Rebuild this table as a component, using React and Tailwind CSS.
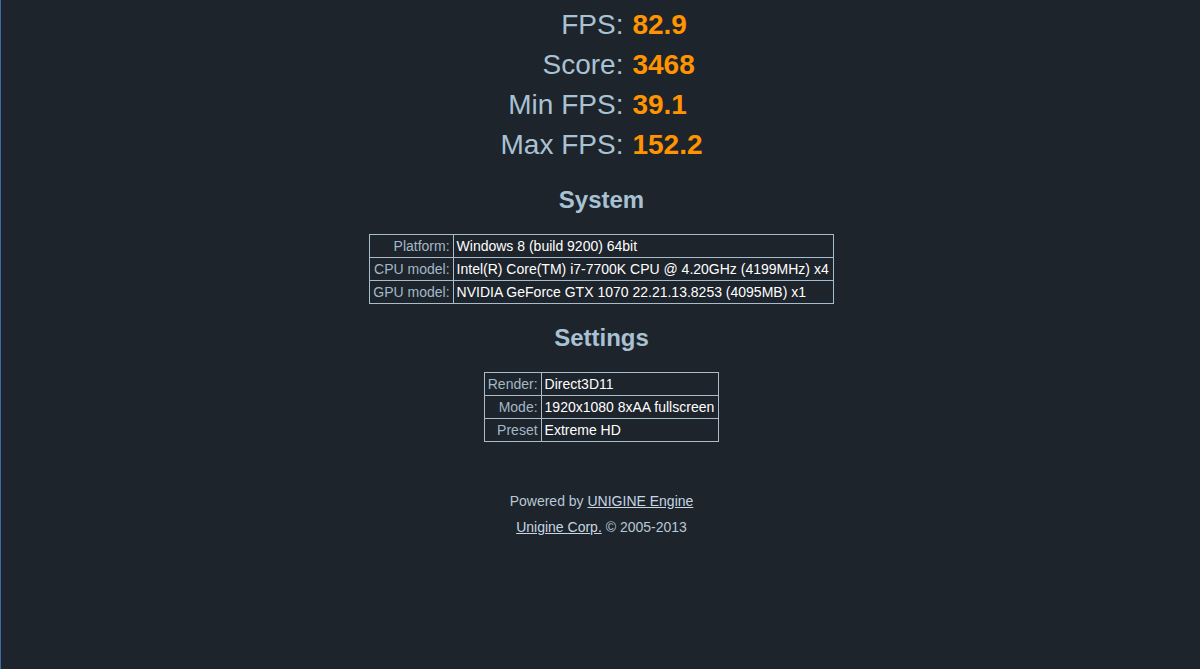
export default function App() {
  const stats = [
    ["FPS:", "82.9"],
    ["Score:", "3468"],
    ["Min FPS:", "39.1"],
    ["Max FPS:", "152.2"],
  ];
  const system = [
    ["Platform:", "Windows 8 (build 9200) 64bit"],
    ["CPU model:", "Intel(R) Core(TM) i7-7700K CPU @ 4.20GHz (4199MHz) x4"],
    ["GPU model:", "NVIDIA GeForce GTX 1070 22.21.13.8253 (4095MB) x1"],
  ];
  const settings = [
    ["Render:", "Direct3D11"],
    ["Mode:", "1920x1080 8xAA fullscreen"],
    ["Preset", "Extreme HD"],
  ];
  const Table = ({ rows }) => (
    <table className="mx-auto border-collapse text-[14px]">
      <tbody>
        {rows.map(([k, v]) => (
          <tr key={k}>
            <td className="border border-[#a9bccb] px-[3px] py-0 h-[23px] leading-[18px] text-right text-[#a3b8c6] whitespace-nowrap">
              {k}
            </td>
            <td className="border border-[#a9bccb] pl-[3px] pr-[4px] py-0 h-[23px] leading-[18px] text-left text-white whitespace-nowrap">
              {v}
            </td>
          </tr>
        ))}
      </tbody>
    </table>
  );
  return (
    <div
      className="min-h-[669px] w-full bg-[#1d242c] border-l border-[#3d6aa8] overflow-hidden pl-[2px]"
      style={{ fontFamily: '"Liberation Sans", Arial, sans-serif' }}
    >
      <div className="pt-[5px] flex justify-center">
        <div className="grid grid-cols-[auto_auto] gap-x-[9px] text-[28px] leading-[40px]">
          {stats.map(([k, v]) => (
            <div key={k} className="contents">
              <div className="text-right text-[#a9c2d3]">{k}</div>
              <div className="text-left font-bold text-[#ff9400]">{v}</div>
            </div>
          ))}
        </div>
      </div>
      <h2 className="mt-[21px] mb-[20px] text-center text-[24px] leading-[28px] font-bold text-[#a9c2d3]">
        System
      </h2>
      <Table rows={system} />
      <h2 className="mt-[20px] mb-[20px] text-center text-[24px] leading-[28px] font-bold text-[#a9c2d3]">
        Settings
      </h2>
      <Table rows={settings} />
      <div className="mt-[46px] text-center text-[14px] leading-[26px] text-[#b8c8d4]">
        <div>
          Powered by <span className="underline text-[#c6d6e2]">UNIGINE Engine</span>
        </div>
        <div>
          <span className="underline text-[#c6d6e2]">Unigine Corp.</span> © 2005-2013
        </div>
      </div>
    </div>
  );
}
